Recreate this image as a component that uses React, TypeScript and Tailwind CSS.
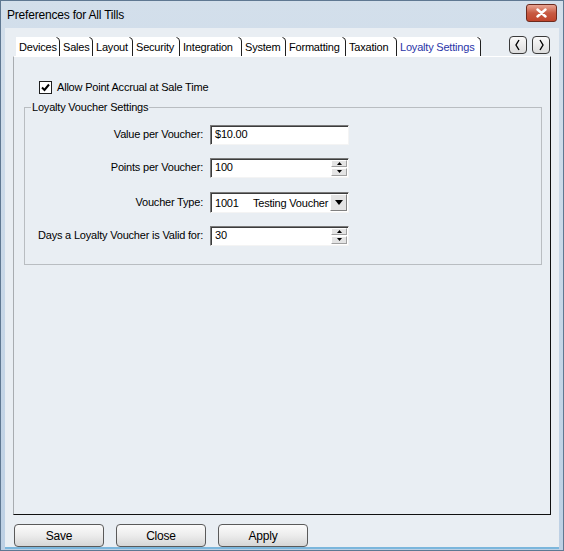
import React from "react";

const font = { fontFamily: '"Liberation Sans", Arial, sans-serif' };

function Tab({ label, w, active }: { label: string; w: number; active?: boolean }) {
  return (
    <div
      className="relative h-[19px] flex items-center pl-[3px] pt-[1px] bg-white whitespace-nowrap"
      style={{ width: w }}
    >
      <span className={active ? "text-[#2a35a8]" : "text-black"}>{label}</span>
      <svg className="absolute right-0 top-0" width="4" height="19" viewBox="0 0 4 19">
        <path d="M0.5 0.5 Q3.5 1 3.5 4 L3.5 19" fill="none" stroke="#202020" strokeWidth="1" />
      </svg>
    </div>
  );
}

function Spin() {
  return (
    <div className="flex flex-col w-[16px] h-[16px] gap-[1px] mr-[1px]">
      <div className="flex-1 bg-[#e4e4e4] border border-t-white border-l-white border-b-[#a0a0a0] border-r-[#a0a0a0] flex items-center justify-center">
        <svg width="5" height="3" viewBox="0 0 5 3"><path d="M2.5 0 L5 3 L0 3 Z" fill="#000" /></svg>
      </div>
      <div className="flex-1 bg-[#e4e4e4] border border-t-white border-l-white border-b-[#a0a0a0] border-r-[#a0a0a0] flex items-center justify-center">
        <svg width="5" height="3" viewBox="0 0 5 3"><path d="M0 0 L5 0 L2.5 3 Z" fill="#000" /></svg>
      </div>
    </div>
  );
}

function Field({ children }: { children: React.ReactNode }) {
  return (
    <div className="w-[139px] h-[20px] bg-white border border-t-[#7a7a7a] border-l-[#7a7a7a] border-b-[#f4f4f4] border-r-[#f4f4f4] shadow-[inset_1px_1px_0_#3c3c3c] flex items-center">
      {children}
    </div>
  );
}

function Row({ label, children, mt }: { label: string; children: React.ReactNode; mt: string }) {
  return (
    <div className={`flex items-center ${mt}`}>
      <div className="w-[185px] text-right pr-[7px] whitespace-nowrap">{label}</div>
      {children}
    </div>
  );
}

function Btn({ label }: { label: string }) {
  return (
    <div className="w-[90px] h-[23px] rounded-[4px] border border-[#5a5a5a] bg-gradient-to-b from-[#fbfbfb] via-[#ececec] to-[#d6d6d6] flex items-center justify-center text-[12px]">
      {label}
    </div>
  );
}

export default function App() {
  return (
    <div
      className="w-[564px] h-[551px] flex flex-col bg-gradient-to-b from-[#d3dfeb] to-[#bdd0e4] border border-[#5f7892] text-[11px] tracking-[-0.2px] text-black overflow-hidden"
      style={font}
    >
      {/* Title bar */}
      <div className="h-[27px] flex items-center pl-[6px] pr-[6px] shrink-0">
        <span className="text-[12px] tracking-[-0.2px] text-black">Preferences for All Tills</span>
        <div className="ml-auto w-[31px] h-[18px] mt-[-3px] rounded-[3px] border border-[#6d2a1e] bg-gradient-to-b from-[#e8a493] via-[#c75a42] to-[#c0442b] flex items-center justify-center">
          <svg width="11" height="10" viewBox="0 0 11 10">
            <path d="M1.5 1.5 L9.5 8.5 M9.5 1.5 L1.5 8.5" stroke="#fff" strokeWidth="2.4" strokeLinecap="round" />
          </svg>
        </div>
      </div>
      {/* Client */}
      <div className="flex-1 mx-[4px] mb-[1px] bg-[#e9eef3] border-b-2 border-b-[#7bb6dc] flex flex-col">
        <div className="flex items-end h-[28px] pl-[11px] pr-[9px]">
          <Tab label="Devices" w={44} />
          <Tab label="Sales" w={33} />
          <Tab label="Layout" w={40} />
          <Tab label="Security" w={47} />
          <Tab label="Integration" w={62} />
          <Tab label="System" w={44} />
          <Tab label="Formatting" w={60} />
          <Tab label="Taxation" w={51} />
          <Tab label="Loyalty Settings" w={84} active />
          <div className="ml-auto flex gap-[5px] mb-[2px]">
            {["M8 4 L5 9 L8 14", "M6 4 L9 9 L6 14"].map((d) => (
              <div
                key={d}
                className="w-[18px] h-[18px] rounded-[4px] border border-[#3a3a3a] bg-gradient-to-b from-[#fafafa] to-[#dcdcdc] flex items-center justify-center"
              >
                <svg width="14" height="18" viewBox="0 0 14 18">
                  <path d={d} fill="none" stroke="#000" strokeWidth="1.4" />
                </svg>
              </div>
            ))}
          </div>
        </div>
        {/* Panel */}
        <div className="ml-[8px] mr-[8px] h-[459px] border border-t-white border-l-[#a8acb0] border-r-[#101010] border-b-[#101010] flex flex-col">
          <div className="flex items-center mt-[22px] ml-[25px]">
            <div className="w-[13px] h-[13px] bg-white border border-[#1e1e1e] flex items-center justify-center">
              <svg width="9" height="9" viewBox="0 0 9 9">
                <path d="M1 4.5 L3.5 7 L8 1.5" fill="none" stroke="#000" strokeWidth="2" />
              </svg>
            </div>
            <span className="ml-[5px]">Allow Point Accrual at Sale Time</span>
          </div>
          <div className="relative ml-[10px] mr-[8px] mt-[11px] h-[158px] border border-[#b9bdc1]">
            <div className="absolute left-[6px] top-[-8px] px-[1px] bg-[#e9eef3] leading-[14px] whitespace-nowrap">
              Loyalty Voucher Settings
            </div>
            <div className="mt-[17px]">
              <Row label="Value per Voucher:" mt="">
                <Field>
                  <span className="ml-[4px]">$10.00</span>
                </Field>
              </Row>
              <Row label="Points per Voucher:" mt="mt-[13px]">
                <Field>
                  <span className="ml-[4px] flex-1">100</span>
                  <Spin />
                </Field>
              </Row>
              <Row label="Voucher Type:" mt="mt-[14px]">
                <div className="w-[139px] h-[21px] bg-white border border-t-[#7a7a7a] border-l-[#7a7a7a] border-b-[#f4f4f4] border-r-[#f4f4f4] shadow-[inset_1px_1px_0_#3c3c3c] flex items-center overflow-hidden">
                  <span className="ml-[4px] mt-[2px] whitespace-nowrap w-[115px] overflow-hidden">
                    1001&nbsp;&nbsp;&nbsp;&nbsp;&nbsp;Testing Voucher
                  </span>
                  <div className="w-[17px] h-[17px] bg-[#e4e4e4] border border-t-white border-l-white border-b-[#808080] border-r-[#808080] flex items-center justify-center">
                    <svg width="8" height="5" viewBox="0 0 8 5"><path d="M0 0 L8 0 L4 5 Z" fill="#000" /></svg>
                  </div>
                </div>
              </Row>
              <Row label="Days a Loyalty Voucher is Valid for:" mt="mt-[13px]">
                <Field>
                  <span className="ml-[4px] flex-1">30</span>
                  <Spin />
                </Field>
              </Row>
            </div>
          </div>
        </div>
        <div className="flex gap-[12px] ml-[9px] mt-[9px]">
          <Btn label="Save" />
          <Btn label="Close" />
          <Btn label="Apply" />
        </div>
      </div>
    </div>
  );
}
